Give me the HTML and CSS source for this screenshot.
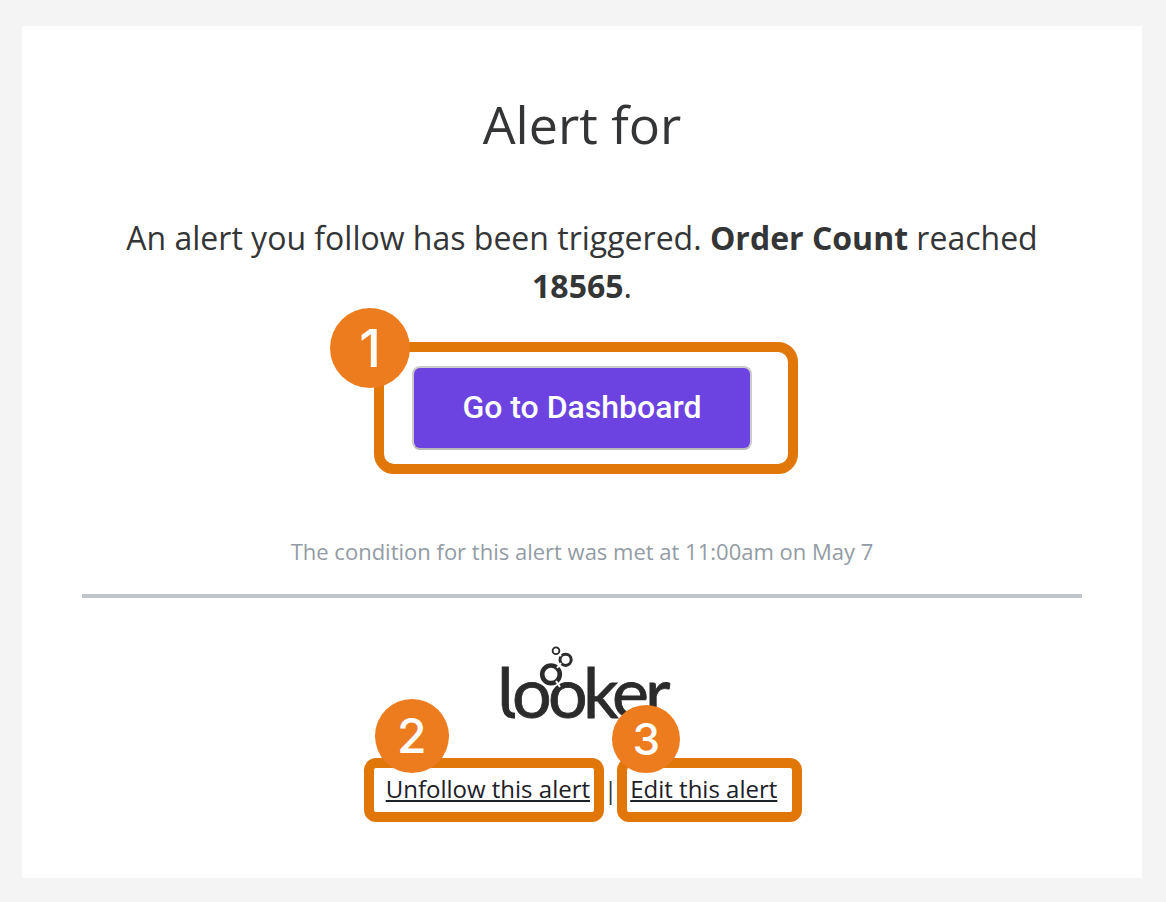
FILE: index.html
```html
<!DOCTYPE html>
<html lang="en">

<head>
    <meta charset="UTF-8">
    <meta name="viewport" content="width=device-width, initial-scale=1.0">
    <title>Alert for</title>
    <link rel="stylesheet" href="styles.css">
</head>

<body>
    <main class="card">
        <h1>Alert for</h1>
        <p class="message">An alert you follow has been triggered. <strong>Order Count</strong> reached <strong>18565</strong>.</p>

        <div class="callout callout-main">
            <span class="badge">1</span>
            <button class="dashboardBtn" type="button">Go to Dashboard</button>
        </div>

        <p class="condition">The condition for this alert was met at 11:00am on May 7</p>
        <hr>

        <svg class="logo" viewBox="0 0 172 78" role="img" aria-label="looker">
            <g class="logo-letters">
                <text x="-3" y="74">l</text>
                <text x="12" y="74">o</text>
                <text x="48" y="74">o</text>
                <text x="83" y="74">k</text>
                <text x="112" y="74">e</text>
                <text x="145" y="74">r</text>
            </g>
            <path class="logo-corner" d="M0 78 V62 H2.2 Q2.2 74.5 16 74.8 V78 Z" />
            <path class="logo-tail" d="M5.6 60 V62 Q5.6 71.8 15 71.8" />
            <circle class="logo-ring" cx="51" cy="30.3" r="8.8" stroke-width="4.6" />
            <circle class="logo-ring" cx="65.6" cy="15.8" r="5.6" stroke-width="3" />
            <circle class="logo-ring" cx="56" cy="6.7" r="3.4" stroke-width="1.8" />
            <path class="logo-cut" d="M56 37 L60 43 M57 24 L61 19 M59 10 L61 12" />
        </svg>

        <nav class="links">
            <div class="callout callout-unfollow">
                <span class="badge">2</span>
                <a href="#unfollow">Unfollow this alert</a>
            </div>
            <span class="divider">|</span>
            <div class="callout callout-edit">
                <span class="badge">3</span>
                <a href="#edit">Edit this alert</a>
            </div>
        </nav>
    </main>
</body>

</html>
```

FILE: styles.css
```css
* {
  margin: 0;
  padding: 0;
  box-sizing: border-box;
}

body {
  padding: 26px 24px 24px 22px;
  background-color: #f4f4f4;
  font-family: "Open Sans", "Noto Sans", sans-serif;
  color: #343536;
}

.card {
  display: flex;
  flex-direction: column;
  align-items: center;
  padding: 62px 60px 56px;
  background-color: #ffffff;
  text-align: center;
}

h1 {
  font-size: 52px;
  font-weight: 400;
  line-height: 72px;
}

.message {
  margin-top: 54px;
  padding: 0 24px;
  font-size: 32px;
  line-height: 48px;
}

.callout {
  position: relative;
  border: 10px solid #e17709;
}

.callout-main {
  margin: 32px 0 0 8px;
  padding: 14px 36px 14px 28px;
  border-radius: 20px;
}

.dashboardBtn {
  display: block;
  width: 340px;
  height: 84px;
  padding-bottom: 2px;
  border: 2px solid #cccccc;
  border-bottom-color: #b8b8b8;
  border-radius: 8px;
  background-color: #6c43e0;
  color: #ffffff;
  font-family: Roboto, sans-serif;
  font-size: 32px;
  font-weight: 500;
  cursor: pointer;
}

.badge {
  position: absolute;
  display: flex;
  justify-content: center;
  align-items: center;
  border-radius: 50%;
  background-color: #ec7c1e;
  color: #ffffff;
  font-family: Inter, sans-serif;
  font-weight: 500;
}

.callout-main .badge {
  top: -44px;
  left: -54px;
  width: 80px;
  height: 80px;
  font-size: 52px;
}

.condition {
  margin-top: 60px;
  font-size: 22px;
  line-height: 34px;
  color: #939ba5;
}

hr {
  width: 100%;
  margin-top: 26px;
  border: none;
  border-top: 4px solid #c1c6cc;
}

.logo {
  width: 172px;
  height: 78px;
  margin: 46px 0 0 8px;
  overflow: visible;
}

.logo-letters {
  font-family: Lato, sans-serif;
  font-size: 70px;
  fill: #2b2b2b;
  stroke: #2b2b2b;
  stroke-width: 0.8;
}

.logo-ring,
.logo-tail {
  fill: none;
  stroke: #2b2b2b;
}

.logo-tail {
  stroke-width: 6px;
}

.logo-corner {
  fill: #ffffff;
}

.logo-cut {
  stroke: #ffffff;
  stroke-width: 2px;
}

.links {
  display: flex;
  align-items: center;
  margin-top: 36px;
  padding-left: 2px;
  font-size: 24px;
  line-height: 42px;
}

.links a {
  color: #1c2027;
}

.links .callout {
  padding-bottom: 2px;
  border-radius: 12px;
}

.links .callout-unfollow {
  padding-left: 12px;
  padding-right: 4px;
}

.links .callout-edit {
  padding-left: 3px;
  padding-right: 15px;
}

.callout-unfollow .badge {
  top: -69px;
  left: 1px;
  width: 74px;
  height: 74px;
  font-size: 48px;
}

.callout-edit .badge {
  top: -63px;
  left: -15px;
  width: 68px;
  height: 68px;
  font-size: 44px;
}
```
